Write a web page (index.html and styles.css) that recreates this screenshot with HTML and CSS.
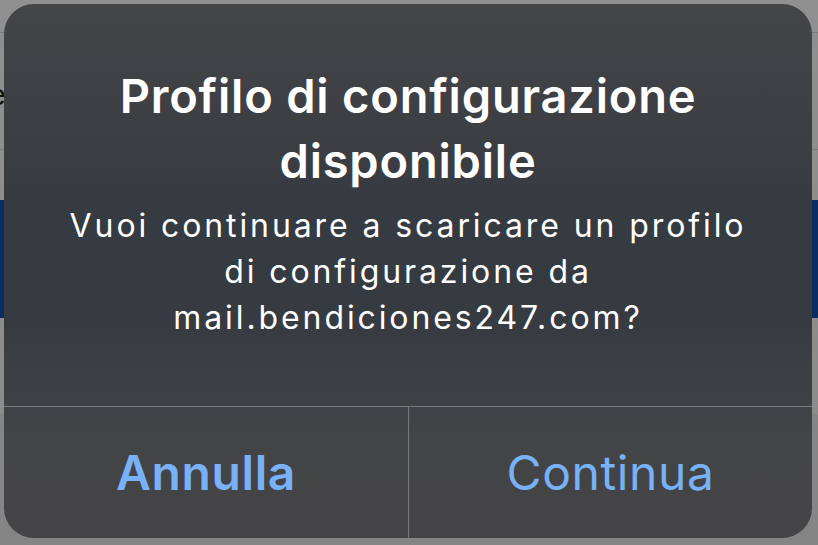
FILE: index.html
```html
<!DOCTYPE html>
<html lang="it">
<head>
<meta charset="utf-8">
<title>Profilo di configurazione disponibile</title>
<link rel="stylesheet" href="styles.css">
</head>
<body>
<div class="backdrop">
  <div class="bg-top"></div>
  <div class="bg-row bg-text"><span class="bg-glyph">e</span></div>
  <div class="bg-row bg-gap"></div>
  <div class="bg-band"></div>
  <div class="bg-row bg-mid"></div>
  <div class="bg-bottom"></div>
</div>
<div class="alert" role="alertdialog">
  <div class="alert-body">
    <h1 class="alert-title">Profilo di configurazione disponibile</h1>
    <p class="alert-message">Vuoi continuare a scaricare un profilo<br>di configurazione da<br>mail.bendiciones247.com?</p>
  </div>
  <div class="alert-actions">
    <button class="alert-btn alert-btn-cancel">Annulla</button>
    <button class="alert-btn">Continua</button>
  </div>
</div>
</body>
</html>
```
FILE: styles.css
```css
html, body {
  margin: 0;
  padding: 0;
}
body {
  width: 818px;
  height: 545px;
  overflow: hidden;
  background: #8e8e8e;
  font-family: Inter, "Noto Sans", "Liberation Sans", sans-serif;
  position: relative;
}
.backdrop {
  display: flex;
  flex-direction: column;
  height: 545px;
}
.bg-top {
  height: 32px;
  background: #909090;
  border-bottom: 1px solid #7b7b7b;
}
.bg-row {
  background: #8e8e8e;
}
.bg-text {
  height: 116px;
  border-bottom: 1px solid #7b7b7b;
  position: relative;
  overflow: hidden;
}
.bg-glyph {
  position: absolute;
  left: -11px;
  top: 45px;
  font-size: 30px;
  color: #111;
  font-family: "Liberation Sans", sans-serif;
}
.bg-gap {
  height: 50px;
}
.bg-band {
  height: 118px;
  background: #0b2c62;
}
.bg-mid {
  height: 97px;
  background: #8c8c8c;
}
.bg-bottom {
  flex: 1;
  background: #858585;
}
.alert {
  position: absolute;
  left: 4px;
  top: 4px;
  width: 808px;
  height: 534px;
  border-radius: 30px;
  overflow: hidden;
  display: flex;
  flex-direction: column;
  background: linear-gradient(180deg, #444547 0%, #3d3f43 22%, #363a41 38%, #363a41 58%, #3e4045 72%, #434446 80%, #444446 100%);
}
.alert-body {
  height: 402px;
  box-sizing: border-box;
  padding: 59px 20px 0;
  text-align: center;
  color: #fff;
}
.alert-title {
  margin: 0;
  font-size: 47px;
  font-weight: 600;
  line-height: 65px;
  letter-spacing: 0.8px;
  padding: 0 50px;
}
.alert-message {
  margin: 10px 0 0;
  font-size: 32px;
  font-weight: 400;
  line-height: 46px;
  letter-spacing: 2.9px;
}
.alert-actions {
  flex: 1;
  display: grid;
  grid-template-columns: 1fr 1fr;
  border-top: 1px solid #78797b;
}
.alert-btn {
  background: transparent;
  border: 0;
  margin: 0;
  padding: 0;
  font-family: inherit;
  font-size: 48px;
  font-weight: 400;
  letter-spacing: 0.6px;
  color: #79b1f6;
  cursor: pointer;
}
.alert-btn + .alert-btn {
  border-left: 1px solid #78797b;
}
.alert-btn-cancel {
  font-weight: 600;
}
```
